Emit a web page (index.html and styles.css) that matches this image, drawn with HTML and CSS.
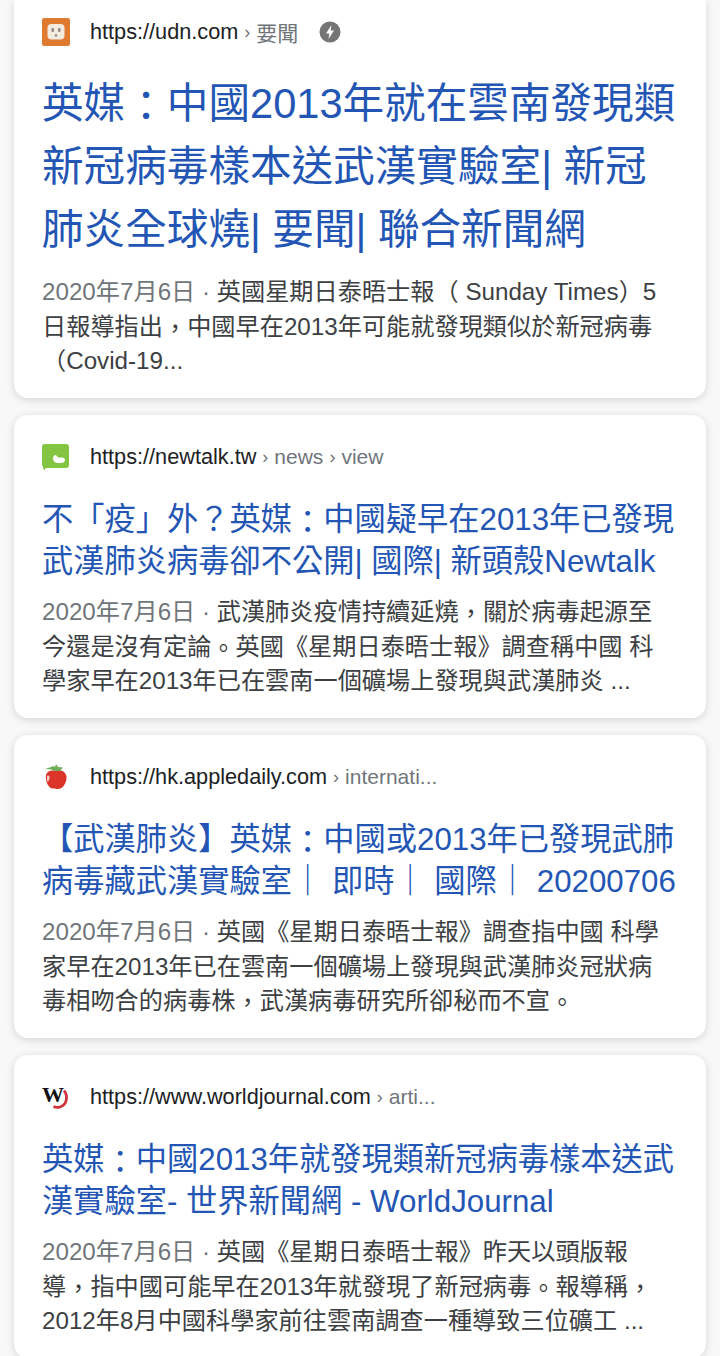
FILE: index.html
```html
<!DOCTYPE html>
<html lang="zh-Hant">
<head>
<meta charset="utf-8">
<title>Search results</title>
<link rel="stylesheet" href="styles.css">
</head>
<body>
<main class="list">
  <article class="card card-first">
    <div class="source">
      <svg class="fav" viewBox="0 0 28 28"><rect width="28" height="28" rx="2" fill="#e07a30"/><rect x="5.500" y="6" width="17" height="15.500" rx="4" fill="#f3eae0"/><rect x="9.500" y="10" width="2.500" height="4" rx="1" fill="#8f8a86"/><rect x="16" y="10" width="2.500" height="4" rx="1" fill="#8f8a86"/><circle cx="14" cy="17.500" r="1.300" fill="#8f8a86"/></svg>
      <span class="url">https://udn.com</span><span class="sep">›</span><span class="crumb">要聞</span>
      <svg class="amp" viewBox="0 0 22 22"><circle cx="11" cy="11" r="10.500" fill="#757575"/><path d="M12.500 4 7 12.500h3.400L9.500 18l5.500-8.500h-3.400z" fill="#fff"/></svg>
    </div>
    <h2 class="title title-big">英媒<span class="punct">：</span>中國2013年就在雲南發現類<br>新冠病毒樣本送武漢實驗室| 新冠<br>肺炎全球燒| 要聞| 聯合新聞網</h2>
    <p class="snippet snippet-first"><span class="date">2020年7月6日 · </span>英國星期日泰晤士報（ Sunday Times）5<br>日報導指出<span class="punct">，</span>中國早在2013年可能就發現類似於新冠病毒<br>（Covid-19...</p>
  </article>
  <article class="card">
    <div class="source">
      <svg class="fav" viewBox="0 0 28 28"><path d="M3 1h21a3 3 0 0 1 3 3v18a3 3 0 0 1-3 3H4l-2 2.500-1-3.500L0 22V4a3 3 0 0 1 3-3z" fill="#83c441"/><path d="M11 15c0-2 1.500-3.500 3-3 1 2 3 3 5 2.500 2 0 4 .5 4 2.500s-2 3-4 3h-3c-3 0-5-2-5-5z" fill="#fff"/></svg>
      <span class="url">https://newtalk.tw</span><span class="sep">›</span><span class="crumb">news</span><span class="sep">›</span><span class="crumb">view</span>
    </div>
    <h2 class="title">不「疫」外？英媒<span class="punct">：</span>中國疑早在2013年已發現<br>武漢肺炎病毒卻不公開| 國際| 新頭殼Newtalk</h2>
    <p class="snippet"><span class="date">2020年7月6日 · </span>武漢肺炎疫情持續延燒<span class="punct">，</span>關於病毒起源至<br>今還是沒有定論<span class="punct">。</span>英國《星期日泰晤士報》調查稱中國 科<br>學家早在2013年已在雲南一個礦場上發現與武漢肺炎 ...</p>
  </article>
  <article class="card">
    <div class="source">
      <svg class="fav" viewBox="0 0 28 28"><path d="M4 12c1-4 5-5 9.500-4.500 5-1 10 .5 11 6 .5 6-3.500 12.500-8.500 12.500-2 0-3-.5-5-.5C7 25.500 3 19 4 12z" fill="#dc3429"/><path d="M3 5.500 8 4.500 11 3l2 1 1-3 2 3 5 .5-3 3.500-5 0-4-1.500z" fill="#6fae5a"/><path d="M5 13c1.500-1 3 0 2.500 2.500S6 19 5 18z" fill="#f6c9c2"/></svg>
      <span class="url">https://hk.appledaily.com</span><span class="sep">›</span><span class="crumb">internati...</span>
    </div>
    <h2 class="title">【武漢肺炎】英媒<span class="punct">：</span>中國或2013年已發現武肺<br>病毒藏武漢實驗室｜ 即時｜ 國際｜ 20200706</h2>
    <p class="snippet"><span class="date">2020年7月6日 · </span>英國《星期日泰晤士報》調查指中國 科學<br>家早在2013年已在雲南一個礦場上發現與武漢肺炎冠狀病<br>毒相吻合的病毒株<span class="punct">，</span>武漢病毒研究所卻秘而不宣<span class="punct">。</span></p>
  </article>
  <article class="card">
    <div class="source">
      <svg class="fav" viewBox="0 0 28 28"><path d="M22 7.500c4 5 3.500 14-4 16.500-2.500.8-4.500.5-6.500-.5" fill="none" stroke="#d0343a" stroke-width="2.800"/><text class="wj" x="0" y="19">W</text></svg>
      <span class="url">https://www.worldjournal.com</span><span class="sep">›</span><span class="crumb">arti...</span>
    </div>
    <h2 class="title">英媒<span class="punct">：</span>中國2013年就發現類新冠病毒樣本送武<br>漢實驗室- 世界新聞網 - WorldJournal</h2>
    <p class="snippet"><span class="date">2020年7月6日 · </span>英國《星期日泰晤士報》昨天以頭版報<br>導<span class="punct">，</span>指中國可能早在2013年就發現了新冠病毒<span class="punct">。</span>報導稱<span class="punct">，</span><br>2012年8月中國科學家前往雲南調查一種導致三位礦工 ...</p>
  </article>
</main>
</body>
</html>
```
FILE: styles.css
```css
* { box-sizing: border-box; }
html, body { margin: 0; padding: 0; }
body {
  width: 720px;
  height: 1356px;
  overflow: hidden;
  background: #f8f8f8;
  font-family: "Liberation Sans", "Noto Sans CJK TC", sans-serif;
}
.list {
  display: flex;
  flex-direction: column;
  gap: 17px;
  padding: 0 14px;
}
.card {
  height: 303px;
  padding: 28px 28px 0;
  background: #fff;
  border-radius: 14px;
  box-shadow: 0 2px 8px rgba(0, 0, 0, 0.14);
  overflow: hidden;
}
.card-first {
  height: 398px;
  padding-top: 18px;
  border-radius: 0 0 14px 14px;
}
.source {
  display: flex;
  align-items: center;
  height: 28px;
  white-space: nowrap;
}
.fav { width: 28px; height: 28px; flex: none; margin-right: 20px; }
.wj { font-family: "Liberation Serif", serif; font-size: 22px; font-weight: 700; fill: #111; }
.url { font-size: 21.700px; color: #202124; }
.sep { font-size: 18px; color: #70757a; margin: 0 6px; }
.crumb { font-size: 21px; color: #70757a; }
.amp { width: 22px; height: 22px; margin-left: 21px; }
.title {
  margin: 28px 0 0;
  font-size: 31.250px;
  line-height: 42px;
  font-weight: 400;
  color: #2356b4;
  white-space: nowrap;
}
.title-big {
  margin-top: 26px;
  font-size: 41.600px;
  line-height: 63px;
}
.snippet {
  margin: 12px 0 0;
  font-size: 24.200px;
  line-height: 34.700px;
  color: #3c4043;
  white-space: nowrap;
}
.snippet-first { margin-top: 14px; }
.date { color: #70757a; }
.punct { display: inline-block; transform: translateY(0.08em); }
```
